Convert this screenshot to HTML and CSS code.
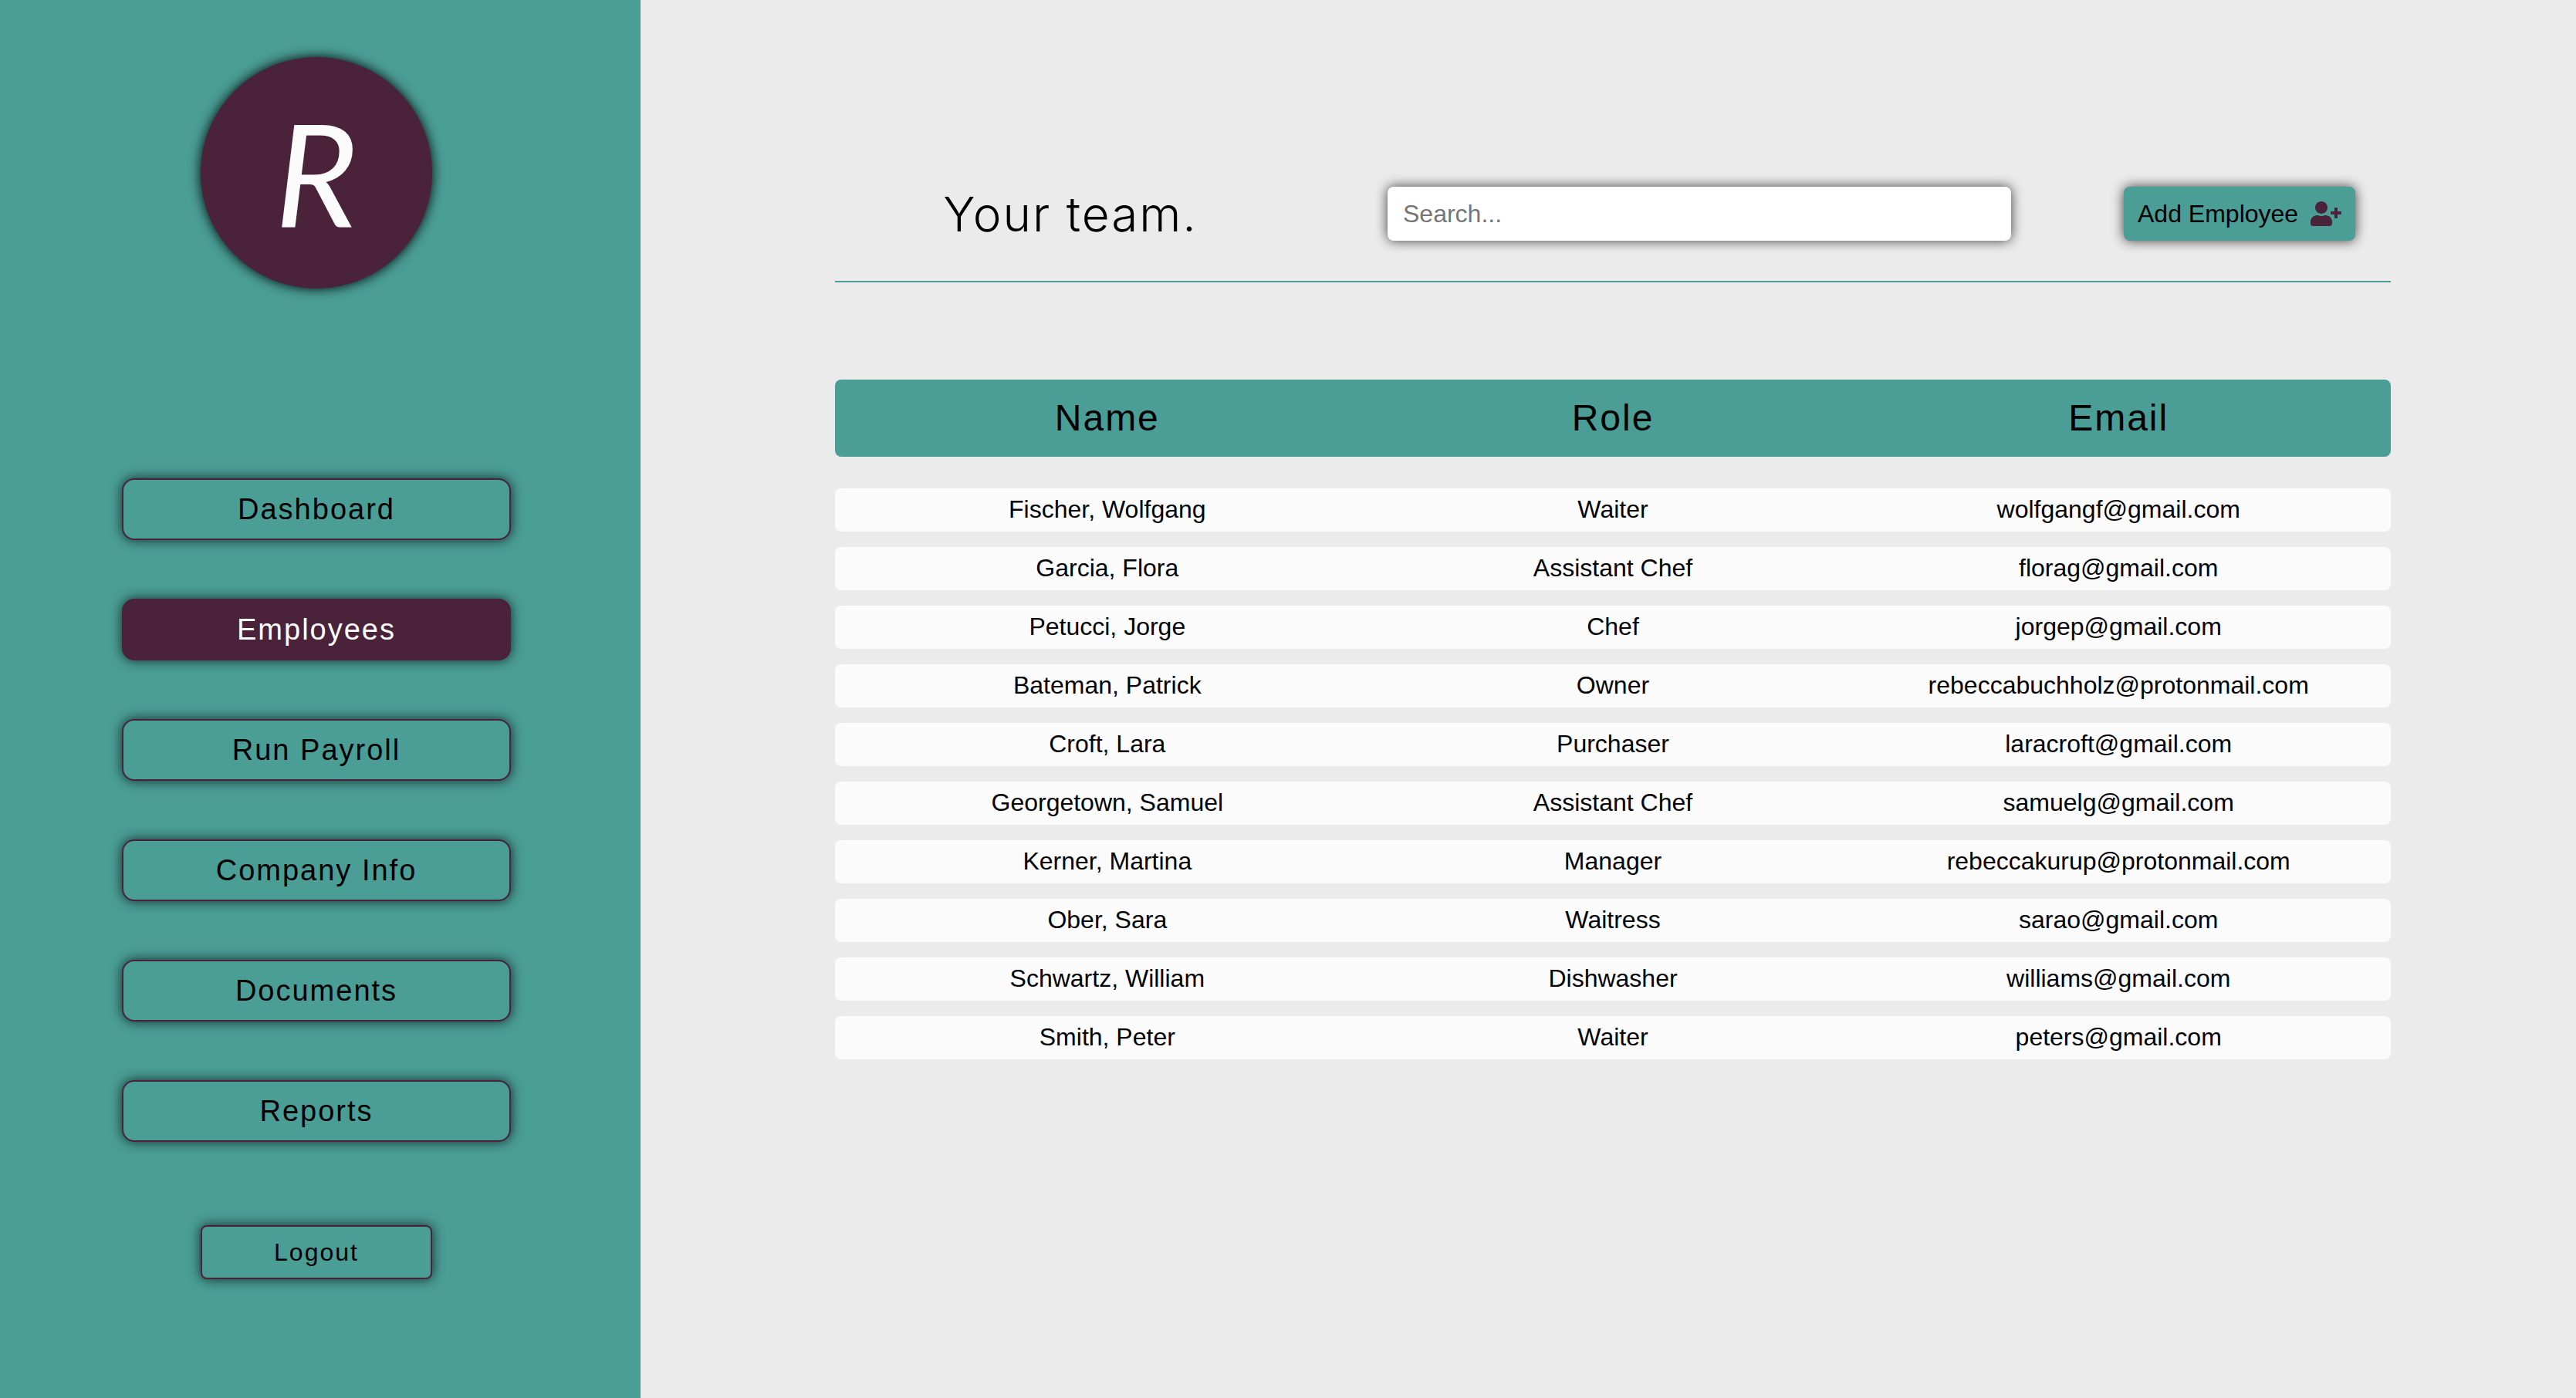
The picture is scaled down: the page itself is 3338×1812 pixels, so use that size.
FILE: index.html
```html
<!DOCTYPE html>
<html lang="en">
<head>
<meta charset="utf-8">
<title>Your team</title>
<link rel="stylesheet" href="styles.css">
</head>
<body>
<div class="app">
  <aside class="sidebar">
    <div class="logo">R</div>
    <nav class="nav">
      <button class="nav-button" type="button">Dashboard</button>
      <button class="nav-button active" type="button">Employees</button>
      <button class="nav-button" type="button">Run Payroll</button>
      <button class="nav-button" type="button">Company Info</button>
      <button class="nav-button" type="button">Documents</button>
      <button class="nav-button" type="button">Reports</button>
    </nav>
    <button class="logout" type="button">Logout</button>
  </aside>
  <main class="content">
    <header class="toolbar">
      <h1 class="title">Your team.</h1>
      <input class="search" type="search" placeholder="Search..." aria-label="Search employees">
      <button class="add" type="button">Add Employee
        <svg class="add-icon" viewBox="0 0 640 512" aria-hidden="true"><path d="M624 208h-64v-64c0-8.800-7.200-16-16-16h-32c-8.800 0-16 7.200-16 16v64h-64c-8.800 0-16 7.200-16 16v32c0 8.800 7.200 16 16 16h64v64c0 8.800 7.200 16 16 16h32c8.800 0 16-7.200 16-16v-64h64c8.800 0 16-7.200 16-16v-32c0-8.800-7.200-16-16-16zm-400 48c70.700 0 128-57.300 128-128S294.700 0 224 0 96 57.300 96 128s57.300 128 128 128zm89.600 32h-16.700c-22.200 10.200-46.900 16-72.900 16s-50.600-5.800-72.900-16h-16.700C60.200 288 0 348.200 0 422.400V464c0 26.500 21.500 48 48 48h352c26.500 0 48-21.500 48-48v-41.600c0-74.200-60.200-134.400-134.400-134.400z"/></svg>
      </button>
    </header>
    <table class="team">
      <thead>
        <tr><th scope="col">Name</th><th class="role" scope="col">Role</th><th scope="col">Email</th></tr>
      </thead>
      <tbody>
        <tr><td>Fischer, Wolfgang</td><td>Waiter</td><td>wolfgangf@gmail.com</td></tr>
        <tr><td>Garcia, Flora</td><td>Assistant Chef</td><td>florag@gmail.com</td></tr>
        <tr><td>Petucci, Jorge</td><td>Chef</td><td>jorgep@gmail.com</td></tr>
        <tr><td>Bateman, Patrick</td><td>Owner</td><td>rebeccabuchholz@protonmail.com</td></tr>
        <tr><td>Croft, Lara</td><td>Purchaser</td><td>laracroft@gmail.com</td></tr>
        <tr><td>Georgetown, Samuel</td><td>Assistant Chef</td><td>samuelg@gmail.com</td></tr>
        <tr><td>Kerner, Martina</td><td>Manager</td><td>rebeccakurup@protonmail.com</td></tr>
        <tr><td>Ober, Sara</td><td>Waitress</td><td>sarao@gmail.com</td></tr>
        <tr><td>Schwartz, William</td><td>Dishwasher</td><td>williams@gmail.com</td></tr>
        <tr><td>Smith, Peter</td><td>Waiter</td><td>peters@gmail.com</td></tr>
      </tbody>
    </table>
  </main>
</div>
</body>
</html>
```
FILE: styles.css
```css
:root {
  --teal: #4a9e96;
  --plum: #4a2239;
  --paper: #fbfbfb;
  --glow: 0 0 16px rgba(0, 0, 0, 0.75);
}

* {
  box-sizing: border-box;
}

body {
  margin: 0;
  background: #ebebeb;
  color: #000;
  font-family: "Liberation Sans", Arial, sans-serif;
  font-size: 32px;
}

button,
input {
  font: inherit;
  color: inherit;
}

.app {
  display: flex;
  min-height: 100vh;
}

.sidebar {
  display: flex;
  flex-direction: column;
  align-items: center;
  width: 830px;
  flex-shrink: 0;
  padding: 74px 168px 74px 158px;
  background: var(--teal);
}

.logo {
  width: 300px;
  height: 300px;
  border-radius: 50%;
  background: var(--plum);
  box-shadow: 0 0 16px #000;
  color: var(--paper);
  font-family: Lato, sans-serif;
  font-size: 184px;
  font-style: italic;
  line-height: 300px;
  text-align: center;
}

.nav {
  display: flex;
  flex-direction: column;
  gap: 76px;
  width: 100%;
  margin: 246px 0 108px;
}

.nav-button,
.logout {
  border: 2px solid var(--plum);
  background: var(--teal);
  box-shadow: var(--glow);
  letter-spacing: 2px;
}

.nav-button {
  height: 80px;
  border-radius: 16px;
  font-size: 38px;
}

.nav-button.active {
  background: var(--plum);
  color: #fff;
}

.logout {
  width: 300px;
  height: 70px;
  border-radius: 8px;
}

.content {
  flex: 1;
  padding: 190px 240px 80px 252px;
}

.toolbar {
  display: grid;
  grid-template-columns: 179fr 202fr 123fr;
  align-items: center;
  height: 176px;
  border-bottom: 2px solid var(--teal);
}

.title {
  margin: 0;
  padding-right: 106px;
  font-family: Inter, "Liberation Sans", sans-serif;
  font-size: 62px;
  font-weight: 300;
  letter-spacing: 2px;
  text-align: center;
}

.search {
  width: 100%;
  height: 70px;
  padding: 0 20px;
  border: 0;
  border-radius: 8px;
  background: #fff;
  box-shadow: var(--glow);
  appearance: none;
}

.search::placeholder {
  color: #757575;
}

.add {
  display: flex;
  align-items: center;
  justify-content: space-between;
  justify-self: end;
  width: 300px;
  height: 70px;
  margin-right: 46px;
  padding: 0 18px;
  border: 0;
  border-radius: 8px;
  background: var(--teal);
  box-shadow: var(--glow);
}

.add-icon {
  width: 40px;
  height: 32px;
  fill: var(--plum);
}

.team {
  width: 100%;
  margin-top: 106px;
  table-layout: fixed;
  border-collapse: separate;
  border-spacing: 0 20px;
  text-align: center;
}

.team tbody::before {
  content: "";
  display: block;
  height: 1px;
}

.team th {
  height: 100px;
  padding: 0 0 2px;
  background: var(--teal);
  font-size: 48px;
  font-weight: 400;
  letter-spacing: 2px;
}

.team .role {
  width: 30%;
}

.team td {
  height: 56px;
  padding: 0 0 2px;
  background: var(--paper);
}

.team tr > :first-child {
  border-radius: 8px 0 0 8px;
}

.team tr > :last-child {
  border-radius: 0 8px 8px 0;
}
```
